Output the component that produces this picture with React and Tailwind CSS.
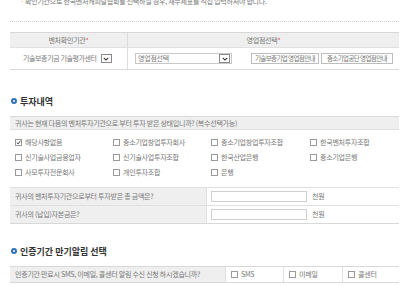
import React from "react";

const font = { fontFamily: '"Noto Sans CJK KR", "Noto Sans", sans-serif' };

function Box({ checked }) {
  return (
    <span className="relative inline-block w-[7px] h-[7px] border border-[#9a9a9a] bg-white shrink-0">
      {checked && (
        <svg viewBox="0 0 7 7" className="absolute left-0 top-0 w-[5px] h-[5px]">
          <path d="M1 3.5 L3 5.5 L6.2 1" fill="none" stroke="#333" strokeWidth="1.3" />
        </svg>
      )}
    </span>
  );
}

function Check({ label, checked }) {
  return (
    <div className="flex items-center gap-[3px] h-[15px]">
      <Box checked={checked} />
      <span>{label}</span>
    </div>
  );
}

function Heading({ children }) {
  return (
    <div className="flex items-center gap-[3px] h-[12px] text-[9px] tracking-normal text-[#333] font-bold">
      <span className="inline-block w-[6px] h-[6px] rounded-full border-[2px] border-[#2f6fb3] bg-white" />
      <span>{children}</span>
    </div>
  );
}

function Arrow() {
  return (
    <span className="flex items-center justify-center w-[11px] h-[9px] border border-[#8a8a8a] bg-white shrink-0">
      <svg viewBox="0 0 8 5" className="w-[6px] h-[4px]">
        <path d="M1 1 L4 4 L7 1" fill="none" stroke="#333" strokeWidth="1.4" />
      </svg>
    </span>
  );
}

export default function App() {
  const items = [
    ["해당사항없음", true],
    ["중소기업창업투자회사"],
    ["중소기업창업투자조합"],
    ["한국벤처투자조합"],
    ["신기술사업금융업자"],
    ["신기술사업투자조합"],
    ["한국산업은행"],
    ["중소기업은행"],
    ["사모투자전문회사"],
    ["개인투자조합"],
    ["은행"],
  ];
  return (
    <div className="w-[409px] h-[286px] overflow-hidden bg-white text-[7px] tracking-[-0.25px] text-[#777] leading-none" style={font}>
      <div className="px-[10px] -mt-[3px]">
        <p className="pl-[10px] h-[8px] leading-[8px]">
          <span className="text-[#f0a040]">·</span> 확인기관으로 한국벤처캐피탈협회를 선택하실 경우, 재무제표를 직접 입력하셔야 합니다.
        </p>
        <div className="mt-[16px] border-t border-dotted border-[#cfcfcf]" />

        <div className="mt-[10px] border-t border-b border-[#d8d8d8]">
          <div className="flex h-[15px] bg-[#efefef] border-b border-[#e0e0e0]">
            <div className="w-[118px] flex items-center justify-center border-r border-[#dcdcdc]">
              벤처확인기관<span className="text-[#e05050]">*</span>
            </div>
            <div className="flex-1 flex items-center justify-center">
              영업점선택<span className="text-[#e05050]">*</span>
            </div>
          </div>
          <div className="flex h-[21px]">
            <div className="w-[118px] flex items-center pl-[13px] gap-[4px] border-r border-[#dcdcdc]">
              <span className="tracking-[-0.4px]">기술보증기금 기술평가센터</span>
              <Arrow />
            </div>
            <div className="flex-1 flex items-center pl-[7px]">
              <div className="flex items-center justify-between w-[97px] h-[11px] border border-[#c8c8c8] pl-[2px] pr-[1px]">
                <span>영업점선택</span>
                <Arrow />
              </div>
              <div className="ml-[19px] w-[68px] h-[11px] flex items-center justify-center border border-[#bdbdbd] bg-white text-[6.5px] tracking-[-0.6px] whitespace-nowrap">기술보증기업 영업점안내</div>
              <div className="ml-[2px] w-[72px] h-[11px] flex items-center justify-center border border-[#bdbdbd] bg-white text-[6.5px] tracking-[-0.6px] whitespace-nowrap">중소기업공단 영업점안내</div>
            </div>
          </div>
        </div>

        <div className="mt-[25px] pl-[1px]">
          <Heading>투자내역</Heading>
        </div>

        <div className="mt-[9px] border-t border-b border-[#d8d8d8]">
          <div className="h-[13px] bg-[#efefef] flex items-center pl-[5px] border-b border-[#e0e0e0]">
            귀사는 현재 다음의 벤처투자기관으로 부터 투자 받은 상태입니까? (복수선택가능)
          </div>
          <div className="grid grid-cols-[98px_98px_99px_1fr] pl-[5px] pt-[5px] pb-[7px]">
            {items.map(([l, c]) => (
              <Check key={l} label={l} checked={c} />
            ))}
          </div>
          <div className="flex h-[18px] border-t border-[#e0e0e0]">
            <div className="w-[197px] bg-[#efefef] flex items-center pl-[5px] border-r border-[#e0e0e0]">
              귀사의 벤처투자기관으로부터 투자받은 총 금액은?
            </div>
            <div className="flex-1 flex items-center pl-[4px] gap-[5px]">
              <span className="w-[96px] h-[11px] border border-[#cfcfcf]" />
              <span>천원</span>
            </div>
          </div>
          <div className="flex h-[18px] border-t border-[#e0e0e0]">
            <div className="w-[197px] bg-[#efefef] flex items-center pl-[5px] border-r border-[#e0e0e0]">
              귀사의 (납입)자본금은?
            </div>
            <div className="flex-1 flex items-center pl-[4px] gap-[5px]">
              <span className="w-[96px] h-[11px] border border-[#cfcfcf]" />
              <span>천원</span>
            </div>
          </div>
        </div>

        <div className="mt-[21px] pl-[1px]">
          <Heading>인증기간 만기알림 선택</Heading>
        </div>

        <div className="mt-[9px] flex h-[17px] border-t border-b border-[#d8d8d8]">
          <div className="w-[216px] bg-[#efefef] flex items-center pl-[5px] border-r border-[#e0e0e0]">
            인증기간 만료시 SMS, 이메일, 콜센터 알림 수신 신청 하시겠습니까?
          </div>
          <div className="w-[58px] flex items-center pl-[5px] border-r border-[#e0e0e0]"><Check label="SMS" /></div>
          <div className="w-[59px] flex items-center pl-[5px] border-r border-[#e0e0e0]"><Check label="이메일" /></div>
          <div className="flex-1 flex items-center pl-[5px]"><Check label="콜센터" /></div>
        </div>
      </div>
    </div>
  );
}
